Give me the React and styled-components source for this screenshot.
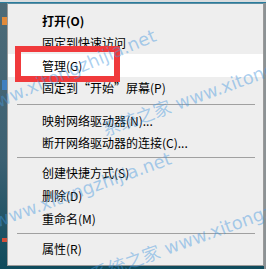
import React from "react";
import styled, { createGlobalStyle } from "styled-components";

const GlobalStyle = createGlobalStyle`
  html, body { margin: 0; padding: 0; }
  body { background: #2d5566; overflow: hidden; }
`;

const Frame = styled.div`
  position: relative;
  width: 266px;
  height: 269px;
  overflow: hidden;
  box-sizing: border-box;
  padding: 3px 2px 3px 7px;
  background:
    linear-gradient(to bottom, #d9dcde 0 2px, #2a7c9c 2px 3px, transparent 3px),
    linear-gradient(to right, transparent 264px, #8c9294 264px),
    linear-gradient(to bottom, transparent 17px, #e08a3a 17px 25px, transparent 25px 80px, #3f7fc0 80px 90px, transparent 90px 238px, #d0503a 238px 242px, transparent 242px) 2px 0 / 5px 100% no-repeat,
    linear-gradient(to bottom, #4d6b78 0%, #3b6072 60%, #0f4b5c 100%);
`;

const Menu = styled.div`
  box-sizing: border-box;
  width: 257px;
  height: 263px;
  background: #eeeeee;
  border: 1px solid #9a9a9a;
  border-top-color: #5d8ea3;
  padding: 5px 0 4px;
  display: flex;
  flex-direction: column;
  font-family: "Microsoft YaHei UI", "Noto Sans CJK SC", sans-serif;
  font-size: 12px;
  color: #000;
`;

const Item = styled.div`
  height: ${(p) => p.$h}px;
  flex: none;
  display: flex;
  align-items: center;
  padding-left: 34px;
  background: ${(p) => (p.$hot ? "#ffffff" : "transparent")};
  font-weight: ${(p) => (p.$bold ? 700 : 400)};
  white-space: nowrap;
  line-height: 1;
`;

const Separator = styled.div`
  height: ${(p) => p.$h}px;
  flex: none;
  box-sizing: border-box;
  padding-top: ${(p) => p.$at}px;
  &::after {
    content: "";
    display: block;
    margin: 0 8px 0 9px;
    height: 1px;
    background: #a0a0a0;
  }
`;

const Highlight = styled.div`
  position: absolute;
  left: 15px;
  top: 46px;
  width: 105px;
  height: 36px;
  box-sizing: border-box;
  border: 6px solid #f03a3c;
  pointer-events: none;
`;

const Watermark = styled.div`
  position: absolute;
  left: ${(p) => p.$x}px;
  top: ${(p) => p.$y - 10}px;
  height: 20px;
  line-height: 20px;
  white-space: nowrap;
  transform-origin: 0 50%;
  transform: rotate(${(p) => p.$angle}deg);
  font-family: "DejaVu Sans", "Noto Sans CJK SC", sans-serif;
  font-size: 18px;
  color: rgba(70, 152, 222, 0.45);
  pointer-events: none;
`;

const items = [
  { label: "打开(O)", h: 23, bold: true },
  { label: "固定到快速访问", h: 22 },
  { label: "管理(G)", h: 23, hot: true },
  { label: "固定到\u201c开始\u201d屏幕(P)", h: 22 },
  { sep: true, h: 11, at: 5 },
  { label: "映射网络驱动器(N)...", h: 22 },
  { label: "断开网络驱动器的连接(C)...", h: 21 },
  { sep: true, h: 9, at: 4 },
  { label: "创建快捷方式(S)", h: 22 },
  { label: "删除(D)", h: 23 },
  { label: "重命名(M)", h: 24 },
  { sep: true, h: 5, at: 2 },
  { label: "属性(R)", h: 25 },
];

const marks = [
  { x: -17, y: 108, angle: -23, text: "www.xitongzhijia.net" },
  { x: 103, y: 131, angle: -20, text: "系统之家 www.xitongzhijia.net" },
  { x: -5, y: 222, angle: -20, text: "www.xitongzhijia.net" },
  { x: 92, y: 276, angle: -20, text: "系统之家 www.xitongzhijia.net" },
];

export default function App() {
  return (
    <>
      <GlobalStyle />
      <Frame>
        <Menu>
          {items.map((it, i) =>
            it.sep ? (
              <Separator key={i} $h={it.h} $at={it.at} />
            ) : (
              <Item key={i} $h={it.h} $hot={it.hot} $bold={it.bold}>
                {it.label}
              </Item>
            )
          )}
        </Menu>
        <Highlight />
        {marks.map((m, i) => (
          <Watermark key={i} $x={m.x} $y={m.y} $angle={m.angle}>
            {m.text}
          </Watermark>
        ))}
      </Frame>
    </>
  );
}
